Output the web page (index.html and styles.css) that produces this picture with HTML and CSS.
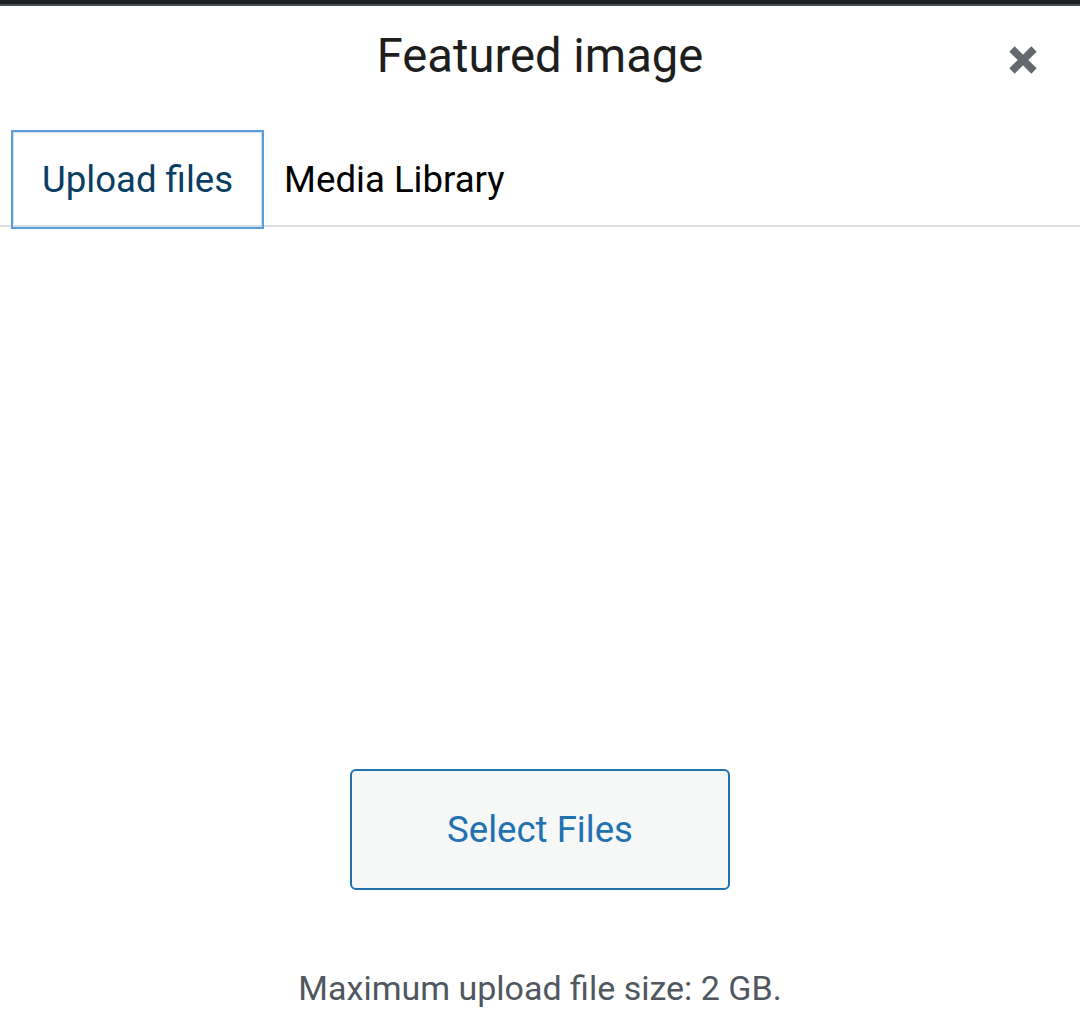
FILE: index.html
```html
<!DOCTYPE html>
<html lang="en">
  <head>
    <meta charset="UTF-8" />
    <meta name="viewport" content="width=device-width, initial-scale=1.0" />
    <title>Featured image</title>
    <link rel="stylesheet" href="styles.css">
  </head>
  <body>
    <div class="topbar"></div>
    <div class="modal">
      <div class="modal-header">
        <h1 class="modal-title">Featured image</h1>
        <button class="close-btn" type="button" aria-label="Close">
          <svg width="30" height="30" viewBox="0 0 30 30">
            <path d="M4 4L26 26M26 4L4 26" stroke="#646970" stroke-width="7.5" fill="none"/>
          </svg>
        </button>
      </div>
      <div class="tabs">
        <button class="tab active" type="button">Upload files</button>
        <button class="tab" type="button">Media Library</button>
      </div>
      <div class="upload-area">
        <button class="select-btn" type="button">Select Files</button>
        <p class="max-size">Maximum upload file size: 2 GB.</p>
      </div>
    </div>
  </body>
</html>
```

FILE: styles.css
```css
body {
  margin: 0;
  font-family: Roboto, "Noto Sans", Arial, sans-serif;
  background: #fff;
  color: #1e1e1e;
}

.topbar {
  height: 4px;
  background: #1d2023;
  border-bottom: 2px solid #4a4d50;
}

.modal-header {
  position: relative;
  display: flex;
  justify-content: center;
  align-items: center;
  height: 100px;
}

.modal-title {
  margin: 0;
  font-size: 47.2px;
  font-weight: 400;
  color: #1e1e1e;
}

.close-btn {
  position: absolute;
  right: 42px;
  top: 39px;
  width: 30px;
  height: 30px;
  padding: 0;
  border: 0;
  background: none;
  display: flex;
}

.tabs {
  display: flex;
  height: 95px;
  margin-top: 24px;
  padding-left: 11px;
  border-bottom: 2px solid #dcdcde;
}

.tab {
  font-family: inherit;
  font-size: 36.6px;
  background: none;
  border: 2px solid transparent;
  padding: 0 29px;
  height: 99px;
  color: #000;
  flex-shrink: 0;
}

.tab.active {
  border-color: #5b9dd9;
  box-shadow: inset 0 0 0 1px #cfe2f5;
  color: #0a3d62;
}

.tab + .tab {
  padding-left: 18px;
}

.upload-area {
  display: flex;
  flex-direction: column;
  align-items: center;
  padding-top: 542px;
}

.select-btn {
  width: 380px;
  height: 121px;
  font-family: inherit;
  font-size: 36.6px;
  color: #2271b1;
  background: #f6f7f7;
  border: 2px solid #2271b1;
  border-radius: 6px;
}

.max-size {
  margin: 78px 0 0;
  font-size: 34px;
  color: #50575e;
}
```
